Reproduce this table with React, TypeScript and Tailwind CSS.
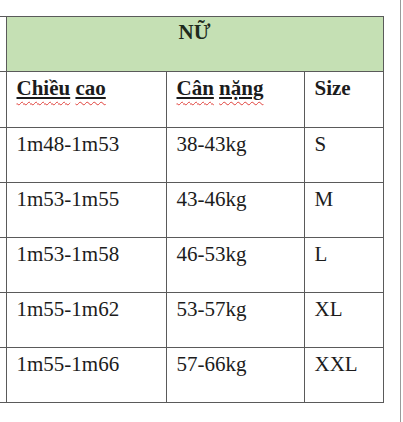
const rows = [
  { h: '1m48-1m53', w: '38-43kg', s: 'S' },
  { h: '1m53-1m55', w: '43-46kg', s: 'M' },
  { h: '1m53-1m58', w: '46-53kg', s: 'L' },
  { h: '1m55-1m62', w: '53-57kg', s: 'XL' },
  { h: '1m55-1m66', w: '57-66kg', s: 'XXL' },
];

function Spell({ children }: { children: string }) {
  return (
    <span className="underline decoration-wavy decoration-[#e0403a] decoration-1 underline-offset-[6px]">
      <span className="underline decoration-[#1a1a1a] decoration-[1.5px] underline-offset-[2px]">{children}</span>
    </span>
  );
}

export default function App() {
  const cell = 'border border-[#5a5a5a] align-top pl-[10px] pt-[4px]';
  return (
    <div
      className="relative w-[403px] h-[422px] bg-white text-[#1c1c1c] text-[21px] leading-[24px]"
      style={{ fontFamily: '"Liberation Serif", "Times New Roman", serif' }}
    >
      <div className="flex h-full">
        <div className="pt-[16px] w-[383px]">
          <table className="border-collapse table-fixed w-[383px]">
            <colgroup>
              <col className="w-[6px]" />
              <col className="w-[160px]" />
              <col className="w-[138px]" />
              <col className="w-[79px]" />
            </colgroup>
            <tbody>
              <tr className="h-[55px]">
                <td className="border-t border-b border-[#5a5a5a]"></td>
                <td colSpan={3} className="border border-[#5a5a5a] bg-[#c5e0b4] align-top text-center pt-[3px] font-bold text-[#1f2a1d]">
                  NỮ
                </td>
              </tr>
              <tr className="h-[56px]">
                <td className="border-t border-b border-[#5a5a5a]"></td>
                <td className={cell + ' font-bold'}>
                  <Spell>Chiều</Spell> <Spell>cao</Spell>
                </td>
                <td className={cell + ' font-bold'}>
                  <Spell>Cân</Spell> <Spell>nặng</Spell>
                </td>
                <td className={cell + ' font-bold'}>Size</td>
              </tr>
              {rows.map((r) => (
                <tr key={r.h + r.s} className="h-[55px]">
                  <td className="border-t border-b border-[#5a5a5a]"></td>
                  <td className={cell}>{r.h}</td>
                  <td className={cell}>{r.w}</td>
                  <td className={cell}>{r.s}</td>
                </tr>
              ))}
            </tbody>
          </table>
        </div>
        <div className="ml-[17px] w-[1px] h-full bg-[#9a9a9a]"></div>
      </div>
    </div>
  );
}
